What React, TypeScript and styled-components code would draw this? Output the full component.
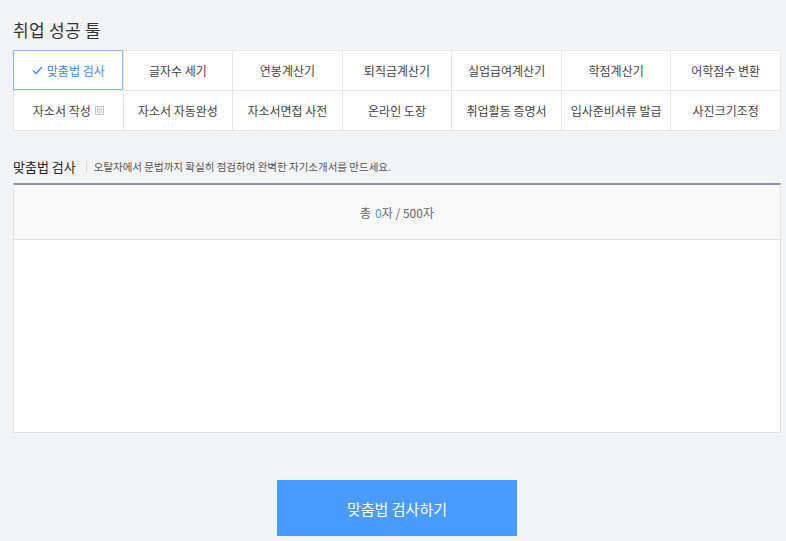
import React from "react";
import styled, { createGlobalStyle } from "styled-components";

const Global = createGlobalStyle`
  html, body { margin: 0; padding: 0; background: #f3f4f6; }
  body { font-family: "Noto Sans CJK KR", "Noto Sans", sans-serif; color: #333; }
  * { box-sizing: border-box; }
`;

const Page = styled.div`
  width: 768px;
  margin-left: 13px;
  padding-top: 18px;
  display: flex;
  flex-direction: column;
`;

const Title = styled.h1`
  margin: 0 0 8px;
  font-size: 17px;
  line-height: 24px;
  font-weight: 400;
  color: #333;
  letter-spacing: 0.3px;
`;

const ToolGrid = styled.div`
  display: grid;
  grid-template-columns: repeat(7, 1fr);
  background: #fff;
  border: 1px solid #e6e7ea;
  border-right: none;
  border-bottom: none;
`;

const Cell = styled.div<{ $active?: boolean }>`
  height: 40px;
  display: flex;
  align-items: center;
  justify-content: center;
  gap: 4px;
  font-size: 12px;
  color: ${(p) => (p.$active ? "#3f8ef5" : "#444")};
  border-right: 1px solid #e6e7ea;
  border-bottom: 1px solid #e6e7ea;
  position: relative;
  ${(p) =>
    p.$active &&
    `
    &::after {
      content: "";
      position: absolute;
      inset: -1px 0 0 -1px;
      border: 1px solid #8db6f7;
      pointer-events: none;
    }
  `}
`;

const SectionHead = styled.div`
  margin-top: 25px;
  display: flex;
  align-items: center;
  height: 20px;
`;

const SectionTitle = styled.span`
  font-size: 13px;
  color: #1f1f1f;
  font-weight: 400;
`;

const Sep = styled.span`
  width: 1px;
  height: 11px;
  background: #d6d6d6;
  margin: 0 7px 0 10px;
`;

const SectionDesc = styled.span`
  font-size: 10.5px;
  color: #555;
`;

const EditorBox = styled.div`
  margin-top: 7px;
  background: #fff;
  border: 1px solid #e2e3e6;
  border-top: 2px solid #8d96a8;
  display: flex;
  flex-direction: column;
`;

const EditorHeader = styled.div`
  height: 55px;
  background: #f9f9f9;
  border-bottom: 1px solid #e3e3e3;
  display: flex;
  align-items: center;
  justify-content: center;
  font-size: 12px;
  color: #666;
`;

const Num = styled.span`
  color: #4a90e2;
  margin-left: 4px;
`;

const EditorBody = styled.div`
  height: 192px;
  background: #fff;
`;

const ButtonRow = styled.div`
  display: flex;
  justify-content: center;
  margin-top: 47px;
`;

const CheckButton = styled.button`
  width: 240px;
  height: 56px;
  border: none;
  background: #4a9bff;
  color: #fff;
  font-family: inherit;
  font-size: 15px;
  cursor: pointer;
`;

const CheckIcon = () => (
  <svg width="11" height="9" viewBox="0 0 11 9" fill="none">
    <path d="M1 4.5 L4 7.5 L10 1" stroke="#3f8ef5" strokeWidth="1.4" />
  </svg>
);

const NewWinIcon = () => (
  <svg width="9" height="9" viewBox="0 0 9 9" fill="none">
    <rect x="0.5" y="0.5" width="8" height="8" stroke="#c4c4c4" />
    <rect x="2.5" y="2.5" width="4" height="4" fill="#e4e4e4" stroke="#c4c4c4" strokeWidth="0.6" />
  </svg>
);

const tools = [
  "맞춤법 검사",
  "글자수 세기",
  "연봉계산기",
  "퇴직금계산기",
  "실업급여계산기",
  "학점계산기",
  "어학점수 변환",
  "자소서 작성",
  "자소서 자동완성",
  "자소서면접 사전",
  "온라인 도장",
  "취업활동 증명서",
  "입사준비서류 발급",
  "사진크기조정",
];

export default function App() {
  return (
    <>
      <Global />
      <Page>
        <Title>취업 성공 툴</Title>
        <ToolGrid>
          {tools.map((t, i) => (
            <Cell key={t} $active={i === 0}>
              {i === 0 && <CheckIcon />}
              {t}
              {t === "자소서 작성" && <NewWinIcon />}
            </Cell>
          ))}
        </ToolGrid>
        <SectionHead>
          <SectionTitle>맞춤법 검사</SectionTitle>
          <Sep />
          <SectionDesc>오탈자에서 문법까지 확실히 점검하여 완벽한 자기소개서를 만드세요.</SectionDesc>
        </SectionHead>
        <EditorBox>
          <EditorHeader>
            총<Num>0</Num>자 / 500자
          </EditorHeader>
          <EditorBody />
        </EditorBox>
        <ButtonRow>
          <CheckButton>맞춤법 검사하기</CheckButton>
        </ButtonRow>
      </Page>
    </>
  );
}
